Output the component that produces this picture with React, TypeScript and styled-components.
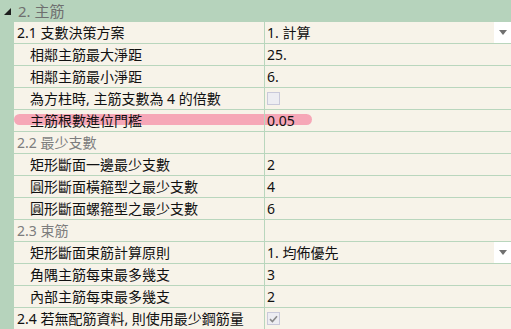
import styled, { createGlobalStyle } from "styled-components";

const GlobalStyle = createGlobalStyle`
    html, body {
        margin: 0;
        padding: 0;
        background: #f7f3e9;
    }
    body {
        font-family: "Noto Sans", "Noto Sans CJK TC", sans-serif;
    }
`;

type Row =
    | { kind: "group"; label: string }
    | { kind: "item"; label: string; indent?: boolean; value?: string; dropdown?: boolean; check?: boolean; checked?: boolean; marked?: boolean };

const rows: Row[] = [
    { kind: "item", label: "2.1 支數決策方案", value: "1. 計算", dropdown: true },
    { kind: "item", label: "相鄰主筋最大淨距", indent: true, value: "25." },
    { kind: "item", label: "相鄰主筋最小淨距", indent: true, value: "6." },
    { kind: "item", label: "為方柱時, 主筋支數為 4 的倍數", indent: true, check: true },
    { kind: "item", label: "主筋根數進位門檻", indent: true, value: "0.05", marked: true },
    { kind: "group", label: "2.2 最少支數" },
    { kind: "item", label: "矩形斷面一邊最少支數", indent: true, value: "2" },
    { kind: "item", label: "圓形斷面橫箍型之最少支數", indent: true, value: "4" },
    { kind: "item", label: "圓形斷面螺箍型之最少支數", indent: true, value: "6" },
    { kind: "group", label: "2.3 束筋" },
    { kind: "item", label: "矩形斷面束筋計算原則", indent: true, value: "1. 均佈優先", dropdown: true },
    { kind: "item", label: "角隅主筋每束最多幾支", indent: true, value: "3" },
    { kind: "item", label: "內部主筋每束最多幾支", indent: true, value: "2" },
    { kind: "item", label: "2.4 若無配筋資料, 則使用最少鋼筋量", check: true, checked: true },
];

const App = () => {
    return (
        <>
            <GlobalStyle />
            <Grid>
                <Category>
                    <svg width="7" height="7" viewBox="0 0 7 7">
                        <polygon points="7,0 7,7 0,7" fill="#1e1e1e" />
                    </svg>
                    <CategoryTitle>2. 主筋</CategoryTitle>
                </Category>
                <Body>
                    <Strip />
                    <Table>
                        {rows.map((row, i) => (
                            <RowLine key={i}>
                                {row.kind === "item" && row.marked && <Marker />}
                                <LabelCell $indent={row.kind === "item" && !!row.indent} $muted={row.kind === "group"}>
                                    {row.label}
                                </LabelCell>
                                <ValueCell>
                                    {row.kind === "item" && row.value && <span>{row.value}</span>}
                                    {row.kind === "item" && row.check && (
                                        <CheckBox>
                                            {row.checked && (
                                                <svg width="9" height="8" viewBox="0 0 9 8">
                                                    <path d="M1 4.2 L3.4 6.5 L8 1.3" stroke="#8a8a8a" strokeWidth="1.6" fill="none" />
                                                </svg>
                                            )}
                                        </CheckBox>
                                    )}
                                    {row.kind === "item" && row.dropdown && (
                                        <DropButton>
                                            <svg width="8" height="5" viewBox="0 0 8 5">
                                                <polygon points="0,0 8,0 4,5" fill="#707070" />
                                            </svg>
                                        </DropButton>
                                    )}
                                </ValueCell>
                            </RowLine>
                        ))}
                    </Table>
                </Body>
            </Grid>
        </>
    );
};

const Grid = styled.div`
    width: 511px;
    height: 329px;
    overflow: hidden;
    background: #f7f3e9;
    font-size: 14px;
    color: #111;
`;

const Category = styled.div`
    height: 22px;
    background: #b6d3bc;
    display: flex;
    align-items: center;
    gap: 7px;
    padding-left: 4px;
    svg {
        margin-top: 1px;
    }
`;

const CategoryTitle = styled.span`
    font-size: 15px;
    color: #6f6f6f;
    line-height: 22px;
`;

const Body = styled.div`
    display: flex;
`;

const Strip = styled.div`
    width: 14px;
    flex: none;
    background: #b6d3bc;
`;

const Table = styled.div`
    flex: 1;
    display: flex;
    flex-direction: column;
`;

const RowLine = styled.div`
    position: relative;
    display: grid;
    grid-template-columns: 251px 1fr;
    height: 21px;
    border-bottom: 1px solid #b9d6bd;
`;

const Marker = styled.div`
    position: absolute;
    left: 0;
    top: 4px;
    width: 298px;
    height: 11px;
    border-radius: 6px;
    background: rgba(246, 142, 166, 0.75);
    pointer-events: none;
`;

const LabelCell = styled.div<{ $indent: boolean; $muted: boolean }>`
    position: relative;
    padding-left: ${(p) => (p.$indent ? "16px" : "3px")};
    line-height: 21px;
    white-space: nowrap;
    overflow: hidden;
    color: ${(p) => (p.$muted ? "#7d7d7d" : "#111")};
    border-right: 1px solid #b9d6bd;
`;

const ValueCell = styled.div`
    position: relative;
    display: flex;
    align-items: center;
    padding-left: 2px;
    line-height: 21px;
    white-space: nowrap;
`;

const CheckBox = styled.span`
    width: 11px;
    height: 11px;
    border: 1px solid #c9c9da;
    background: #ededf2;
    display: flex;
    align-items: center;
    justify-content: center;
`;

const DropButton = styled.span`
    margin-left: auto;
    width: 17px;
    height: 21px;
    background: #fff;
    display: flex;
    align-items: center;
    justify-content: center;
`;

export default App;
